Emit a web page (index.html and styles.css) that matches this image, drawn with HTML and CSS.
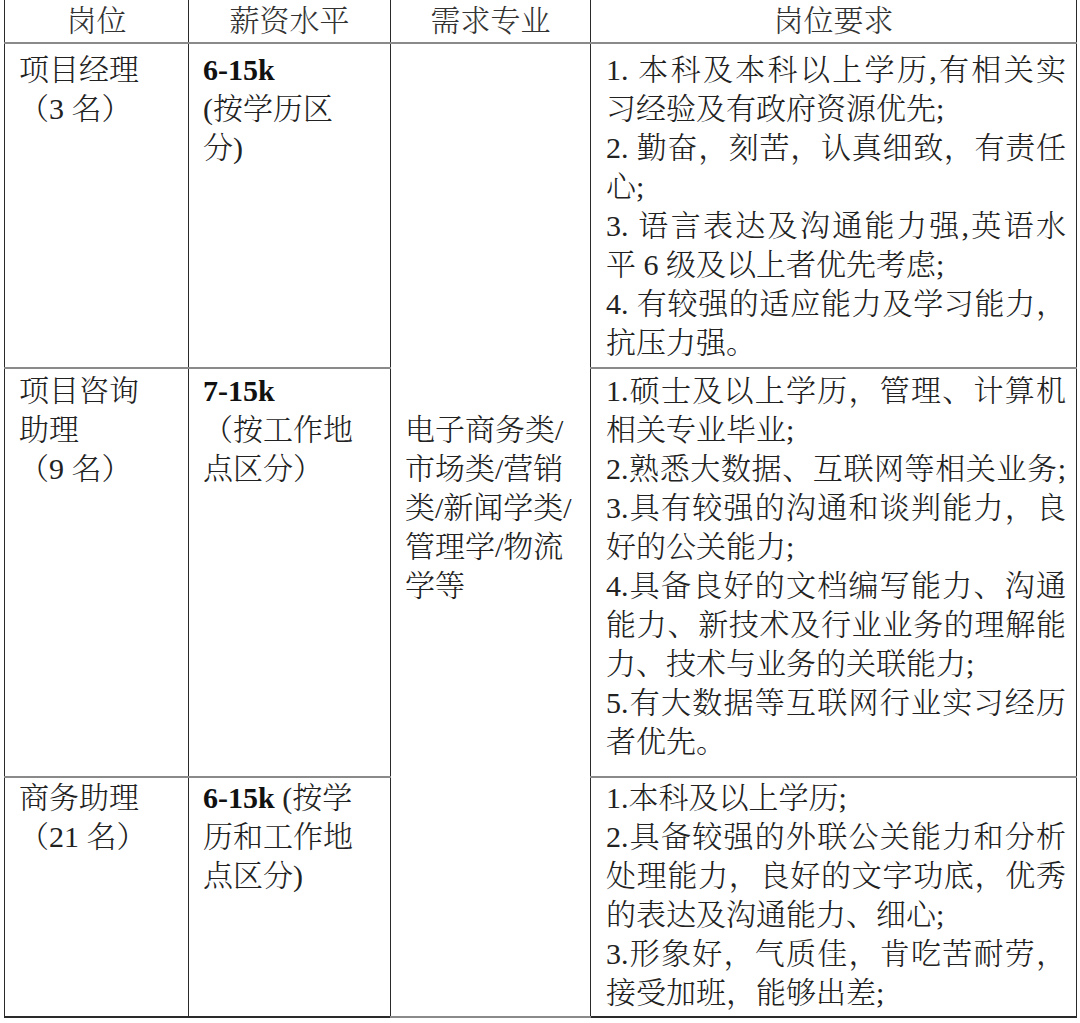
FILE: index.html
```html
<!DOCTYPE html>
<html lang="zh-CN">
<head>
<meta charset="utf-8">
<title>岗位需求</title>
<link rel="stylesheet" href="styles.css">
</head>
<body>
<div class="page">
<table class="jobs">
  <colgroup>
    <col class="c-pos">
    <col class="c-pay">
    <col class="c-major">
    <col class="c-req">
  </colgroup>
  <thead>
    <tr class="head">
      <th>岗位</th>
      <th>薪资水平</th>
      <th>需求专业</th>
      <th>岗位要求</th>
    </tr>
  </thead>
  <tbody>
    <tr class="r1">
      <td class="pos">项目经理<br>（3 名）</td>
      <td class="pay"><b>6-15k</b><br>(按学历区<br>分)</td>
      <td class="major" rowspan="3"><div class="major-text">电子商务类/<br>市场类/营销<br>类/新闻学类/<br>管理学/物流<br>学等</div></td>
      <td class="req">
        <span class="ln">1. 本科及本科以上学历,有相关实</span>
        <span class="ln end">习经验及有政府资源优先;</span>
        <span class="ln">2. 勤奋，刻苦，认真细致，有责任</span>
        <span class="ln end">心;</span>
        <span class="ln">3. 语言表达及沟通能力强,英语水</span>
        <span class="ln end">平 6 级及以上者优先考虑;</span>
        <span class="ln">4. 有较强的适应能力及学习能力，</span>
        <span class="ln end">抗压力强。</span>
      </td>
    </tr>
    <tr class="r2">
      <td class="pos">项目咨询<br>助理<br>（9 名）</td>
      <td class="pay"><b>7-15k</b><br>（按工作地<br>点区分）</td>
      <td class="req">
        <span class="ln">1.硕士及以上学历，管理、计算机</span>
        <span class="ln end">相关专业毕业;</span>
        <span class="ln">2.熟悉大数据、互联网等相关业务;</span>
        <span class="ln">3.具有较强的沟通和谈判能力，良</span>
        <span class="ln end">好的公关能力;</span>
        <span class="ln">4.具备良好的文档编写能力、沟通</span>
        <span class="ln">能力、新技术及行业业务的理解能</span>
        <span class="ln end">力、技术与业务的关联能力;</span>
        <span class="ln">5.有大数据等互联网行业实习经历</span>
        <span class="ln end">者优先。</span>
      </td>
    </tr>
    <tr class="r3">
      <td class="pos">商务助理<br>（21 名）</td>
      <td class="pay"><b>6-15k</b> (按学<br>历和工作地<br>点区分)</td>
      <td class="req">
        <span class="ln end">1.本科及以上学历;</span>
        <span class="ln">2.具备较强的外联公关能力和分析</span>
        <span class="ln">处理能力，良好的文字功底，优秀</span>
        <span class="ln end">的表达及沟通能力、细心;</span>
        <span class="ln">3.形象好，气质佳，肯吃苦耐劳，</span>
        <span class="ln end">接受加班，能够出差;</span>
      </td>
    </tr>
  </tbody>
</table>
</div>
</body>
</html>
```

FILE: styles.css
```css
html, body {
  margin: 0;
  padding: 0;
  background: #ffffff;
}

.page {
  padding: 0 4px 0 4px;
}

.jobs {
  width: 1072px;
  table-layout: fixed;
  border-collapse: collapse;
  font-family: "Liberation Serif", "Noto Serif CJK SC", "Noto Sans CJK SC", serif;
  font-size: 30px;
  font-weight: 300;
  line-height: 39px;
  color: #222222;
  margin-top: -1px;
}

.c-pos { width: 184px; }
.c-pay { width: 202px; }
.c-major { width: 200px; }
.c-req { width: 486px; }

.jobs th,
.jobs td {
  border-left: 1.5px solid #2a2a2a;
  border-right: 1.5px solid #2a2a2a;
  border-top: 2px solid #8a8a8a;
  border-bottom: 2px solid #8a8a8a;
  vertical-align: top;
  padding: 0 10px 0 14px;
  text-align: left;
}

.jobs thead th {
  border-top: none;
  font-weight: 300;
  text-align: center;
  height: 43px;
  padding: 0;
  vertical-align: middle;
  color: #333333;
}

.r1 td { height: 317px; padding-top: 6px; }
.r2 td { height: 405px; padding-top: 2px; }
.r3 td { height: 238px; padding-top: 0; }

.jobs tr.r3 td {
  border-bottom: 2px solid #2a2a2a;
}

.pay b {
  font-weight: bold;
  color: #111111;
}

.jobs td.major {
  vertical-align: middle;
  padding-bottom: 46px;
  padding-top: 0;
}

.jobs td.req {
  padding-left: 15px;
  padding-right: 10px;
}

.ln {
  display: block;
  text-align: justify;
  text-align-last: justify;
  white-space: nowrap;
}

.ln.end {
  text-align-last: left;
}
```
